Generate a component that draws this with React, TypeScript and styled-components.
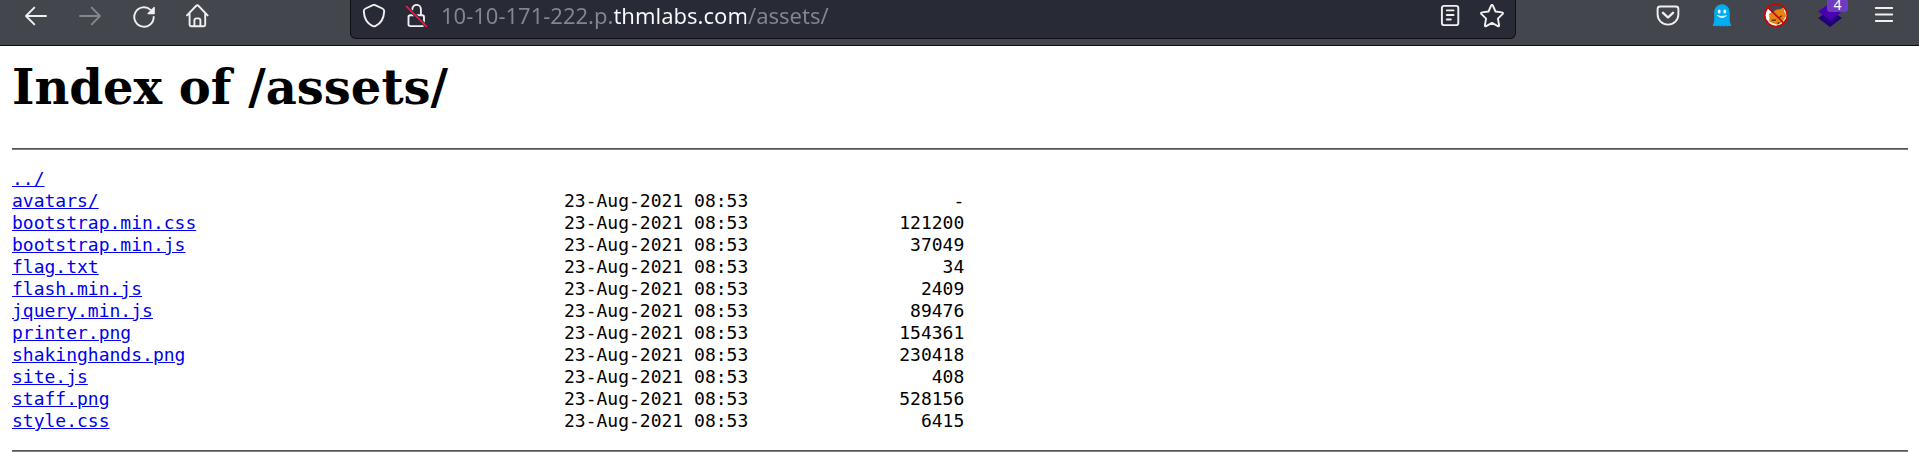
import React from "react";
import styled, { createGlobalStyle } from "styled-components";

const GlobalStyle = createGlobalStyle`
  *, *::before, *::after { box-sizing: border-box; }
  body {
    margin: 0;
    background: #fff;
    color: #000;
    font-family: "DejaVu Serif", serif;
  }
`;

const Toolbar = styled.header`
  display: flex;
  align-items: flex-start;
  height: 46px;
  padding: 0 8px 0 9px;
  background: #43464d;
  border-bottom: 1px solid #0e0f13;
`;

const ButtonGroup = styled.div`
  display: flex;
`;

const ToolButton = styled.button<{ $faded?: boolean }>`
  position: relative;
  display: flex;
  align-items: center;
  justify-content: center;
  width: 54px;
  height: 32px;
  padding: 0;
  border: 0;
  background: none;
  color: ${(p) => (p.$faded ? "#85878b" : "#f0f0f0")};
`;

const FieldButton = styled(ToolButton)`
  width: 42px;
`;

const AddressField = styled.form`
  display: flex;
  flex: 1;
  min-width: 0;
  height: 39px;
  margin: 0 125px;
  padding: 0 2px;
  background: #282a36;
  border: 1px solid #0e0f13;
  border-top: 0;
  border-radius: 0 0 6px 6px;
`;

/* The host's main domain is bright, the rest of the address is dimmed. */
const AddressInput = styled.input`
  flex: 1;
  min-width: 0;
  height: 30px;
  margin: 0;
  padding: 0 4px;
  border: 0;
  outline: 0;
  font: 22px/30px "Noto Sans", sans-serif;
  color: #85868c;
  background: linear-gradient(90deg, #85868c 175px, #fbfbfe 175px, #fbfbfe 309px, #85868c 309px);
  background-clip: text;
  -webkit-background-clip: text;
  -webkit-text-fill-color: transparent;
`;

const Badge = styled.span`
  position: absolute;
  top: 0;
  left: 24px;
  width: 21px;
  height: 12px;
  border-radius: 0 0 3px 3px;
  background: #6f3bc2;
  color: #fff;
  font: 14px/10px "Noto Sans", sans-serif;
  text-align: center;
`;

const Page = styled.main`
  padding: 12px 11px 0 12px;
`;

const Title = styled.h1`
  margin: 0 0 32px;
  font-size: 48px;
  line-height: 58px;
  font-weight: bold;
`;

const Rule = styled.hr`
  height: 2px;
  margin: 0;
  border: 0;
  border-top: 1px solid #555;
  background: #808080;
`;

const Listing = styled.table`
  margin: 18px 0;
  border-collapse: collapse;
  font: 18px/22px "DejaVu Sans Mono", monospace;
`;

const Cell = styled.td<{ $width: number; $right?: boolean }>`
  min-width: ${(p) => p.$width}px;
  height: 22px;
  padding: 0;
  text-align: ${(p) => (p.$right ? "right" : "left")};
  white-space: nowrap;
`;

const FileLink = styled.a`
  color: #0000ee;
  text-decoration: underline;
`;

const Icon = ({ size = 24, children }: { size?: number; children: React.ReactNode }) => (
  <svg
    width={size}
    height={size}
    viewBox={`0 0 ${size} ${size}`}
    fill="none"
    stroke="currentColor"
    strokeWidth="1.9"
    strokeLinecap="round"
    strokeLinejoin="round"
    aria-hidden="true"
  >
    {children}
  </svg>
);

const BackIcon = () => (
  <Icon><path d="M22 12H2.3M10.3 3.6 2 12l8.3 8.4" /></Icon>
);
const ForwardIcon = () => (
  <Icon><path d="M2 12h19.7M13.7 3.6 22 12l-8.3 8.4" /></Icon>
);
const ReloadIcon = () => (
  <Icon>
    <path d="M21.7 13A9.7 9.7 0 1 1 18.6 5.9" />
    <path d="M22.2 3.4v6.2h-6.2z" fill="currentColor" strokeWidth="1.2" />
  </Icon>
);
const HomeIcon = () => (
  <Icon>
    <path d="M1 11.400 10 2q1.300-1.300 2.600 0L21.600 11.400M3.600 9.600v11.200q0 1.400 1.400 1.400h12.800q1.400 0 1.400-1.400V9.600" />
    <path d="M8.400 22v-5.400q0-2.200 2.200-2.200h1.600q2.200 0 2.200 2.200V22" />
  </Icon>
);
const ShieldIcon = () => (
  <Icon>
    <path d="M12 .9q.6 0 1.100.2l7.300 3.400q1.900.9 1.800 2.900C21.800 14.600 18.400 19.600 13.700 21.900q-1.700.8-3.400 0C5.600 19.600 2.200 14.600 1.800 7.400Q1.700 5.400 3.600 4.500l7.300-3.400Q11.400.9 12 .9z" />
  </Icon>
);
const LockOffIcon = () => (
  <Icon>
    <path d="M8.300 6V5.200a4.300 4.300 0 0 1 8.600 0V11.300h1.200q1.900 0 1.900 1.900V20.300q0 1.800-1.900 1.800H6.400q-1.900 0-1.900-1.800v-7.100q0-1.900 1.900-1.900h10.500" />
    <path d="M2.400 2.400 22.400 22.400" stroke="#282a36" strokeWidth="3.400" />
    <path d="M2.400 2.400 22.400 22.400" stroke="#f01540" />
  </Icon>
);
const ReaderIcon = () => (
  <Icon>
    <rect x="3.900" y="1.900" width="16.400" height="19.200" rx="2.200" />
    <path d="M8.800 6.400h6.800M8.800 11h6.800M8.800 15.500h4" />
  </Icon>
);
const StarIcon = () => (
  <Icon>
    <path d="M11.100 1.600q.9-1.500 1.800 0l2.600 5.900 6.500.9q1.700.4.500 1.700l-4.600 4.500 1.200 6.600q.1 1.500-1.300.9L12 18.900l-5.800 3.200q-1.400.6-1.300-.9l1.200-6.600L1.500 10.100Q.3 8.800 2 8.400l6.500-.9z" />
  </Icon>
);
const PocketIcon = () => (
  <Icon>
    <path d="M4.100 2.500h15.800q2.500 0 2.500 2.500v5.200a10.400 10.400 0 0 1-20.800 0V5q0-2.500 2.500-2.500z" />
    <path d="M7 8.800l5 4.700 5-4.700" strokeWidth="2.400" />
  </Icon>
);
const GhostIcon = () => (
  <Icon>
    <path
      d="M12 .2C7.200.2 4.200 3.800 4.200 8.500v7.200c0 2.300-.6 4-1.800 5.900 1 .6 2 .6 3 .1 1 .9 2 .9 3.200-.2 1 1.300 2.100 1.200 3.300.1 1.200 1.100 2.400 1.100 3.400-.1 1.100 1.100 2.200 1.100 3.200.2 1 .5 2 .5 3-.1-1.200-1.900-1.800-3.600-1.800-5.900V8.500C19.700 3.800 16.700.2 12 .2z"
      fill="#00aef0"
      stroke="none"
    />
    <ellipse cx="9.200" cy="7.400" rx="1.400" ry="2" fill="#fff" stroke="none" />
    <ellipse cx="14.800" cy="7.400" rx="1.400" ry="2" fill="#fff" stroke="none" />
    <path d="M7.600 11.600q4.400 4.200 8.800 0-4.400 1.900-8.800 0z" fill="#fff" stroke="#fff" strokeWidth=".6" />
  </Icon>
);
const FoxIcon = () => (
  <Icon size={26}>
    <g stroke="none">
      <path d="M2 9.500 4.500 5 8.500 9 7.500 15 5.500 18.500 2.500 16z" fill="#fff" />
      <path d="M18 6 22 4.500 24.400 10 24 15.500 21 17z" fill="#fff" />
      <path d="M4.500 16.500 6 20.500 12 23.400 18.500 21 22.500 16.500 18 17z" fill="#fbeedd" />
      <path d="M6 10.500 10.500 9 13 6.800 18.500 6 20.500 4.500 21.500 9 23.500 12.500 20.800 16.500 18.500 19.600 14.500 21.800 10.500 20.300 6.300 18.800 6.500 14.500z" fill="#e5850f" />
      <path d="M9 17.300l3.400-.3M16 14.500l2.600-1.500" stroke="#5a3108" strokeWidth="1.300" />
      <path d="M14 20l2.600-1-.8 2.200z" fill="#3a2412" />
    </g>
    <circle cx="13" cy="12.300" r="11.300" stroke="#c40808" strokeWidth="1.600" />
    <path d="M5 4.300 21 20.300" stroke="#c40808" strokeWidth="1.700" />
  </Icon>
);
const LayersIcon = () => (
  <Icon>
    <path d="M12.100 6.200 24 14 12.100 23 0 14z" fill="#200078" stroke="none" />
    <path d="M12.100-1 24 7.400 12.100 16.600 0 7.400z" fill="#4a00ae" stroke="none" />
  </Icon>
);
const MenuIcon = () => (
  <Icon><path d="M3.800 4h16.400M3.800 10.500h16.400M3.800 17h16.400" /></Icon>
);

const files: [string, string, string][] = [
  ["../", "", ""],
  ["avatars/", "23-Aug-2021 08:53", "-"],
  ["bootstrap.min.css", "23-Aug-2021 08:53", "121200"],
  ["bootstrap.min.js", "23-Aug-2021 08:53", "37049"],
  ["flag.txt", "23-Aug-2021 08:53", "34"],
  ["flash.min.js", "23-Aug-2021 08:53", "2409"],
  ["jquery.min.js", "23-Aug-2021 08:53", "89476"],
  ["printer.png", "23-Aug-2021 08:53", "154361"],
  ["shakinghands.png", "23-Aug-2021 08:53", "230418"],
  ["site.js", "23-Aug-2021 08:53", "408"],
  ["staff.png", "23-Aug-2021 08:53", "528156"],
  ["style.css", "23-Aug-2021 08:53", "6415"],
];

export default function App() {
  return (
    <>
      <GlobalStyle />
      <Toolbar>
        <ButtonGroup>
          <ToolButton aria-label="Back"><BackIcon /></ToolButton>
          <ToolButton aria-label="Forward" $faded><ForwardIcon /></ToolButton>
          <ToolButton aria-label="Reload"><ReloadIcon /></ToolButton>
          <ToolButton aria-label="Home"><HomeIcon /></ToolButton>
        </ButtonGroup>
        <AddressField onSubmit={(e) => e.preventDefault()}>
          <FieldButton type="button" aria-label="Tracking protection"><ShieldIcon /></FieldButton>
          <FieldButton type="button" aria-label="Connection not secure"><LockOffIcon /></FieldButton>
          <AddressInput
            type="text"
            aria-label="Address"
            spellCheck={false}
            defaultValue="10-10-171-222.p.thmlabs.com/assets/"
          />
          <FieldButton type="button" aria-label="Reader view"><ReaderIcon /></FieldButton>
          <FieldButton type="button" aria-label="Bookmark"><StarIcon /></FieldButton>
        </AddressField>
        <ButtonGroup>
          <ToolButton aria-label="Pocket"><PocketIcon /></ToolButton>
          <ToolButton aria-label="Ghostery"><GhostIcon /></ToolButton>
          <ToolButton aria-label="FoxyProxy"><FoxIcon /></ToolButton>
          <ToolButton aria-label="Wappalyzer">
            <LayersIcon />
            <Badge>4</Badge>
          </ToolButton>
          <ToolButton aria-label="Menu"><MenuIcon /></ToolButton>
        </ButtonGroup>
      </Toolbar>
      <Page>
        <Title>Index of /assets/</Title>
        <Rule />
        <Listing>
          <tbody>
            {files.map(([name, date, size]) => (
              <tr key={name}>
                <Cell $width={552}><FileLink href={name}>{name}</FileLink></Cell>
                <Cell $width={184}>{date}</Cell>
                <Cell $width={216} $right>{size}</Cell>
              </tr>
            ))}
          </tbody>
        </Listing>
        <Rule />
      </Page>
    </>
  );
}
